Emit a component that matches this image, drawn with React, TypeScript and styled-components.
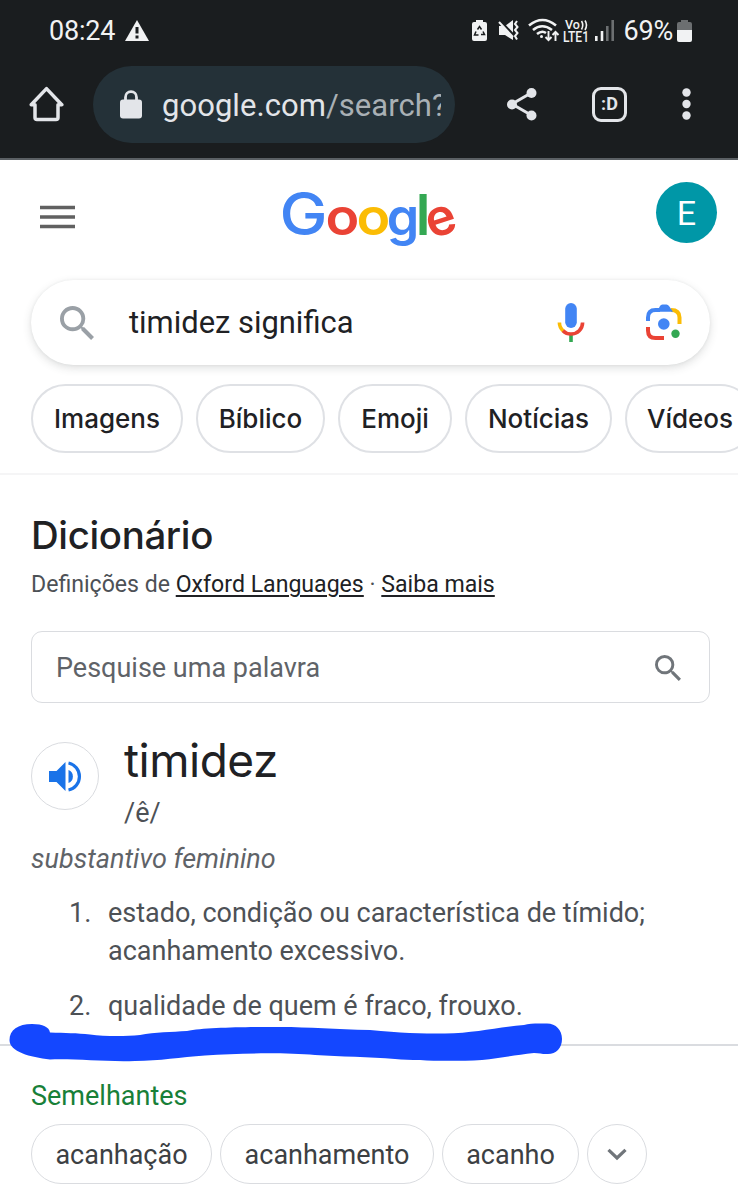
import React from 'react';
import styled, { createGlobalStyle } from 'styled-components';

const GlobalStyle = createGlobalStyle`
  * { box-sizing: border-box; }
  body { margin: 0; background: #fff; overflow: hidden; }
  button { font: inherit; padding: 0; margin: 0; background: none; border: 0; color: inherit; }
  svg { display: block; flex: none; }
`;

const sans = `Roboto, "Liberation Sans", sans-serif`;
const display = `Inter, Roboto, sans-serif`;

const Screen = styled.div`
  position: relative;
  width: 738px;
  height: 1200px;
  overflow: hidden;
  background: #fff;
  color: #202124;
  font-family: ${sans};
`;

const BrowserChrome = styled.header`
  height: 160px;
  background: #1a1d1f;
  border-bottom: 2px solid #5b6064;
`;

const StatusBar = styled.div`
  display: flex;
  justify-content: space-between;
  height: 61px;
  padding: 0 46px 0 49px;
  color: #f1f2f3;
`;

const StatusGroup = styled.div<{ $gap: number }>`
  display: flex;
  align-items: center;
  gap: ${(p) => p.$gap}px;
`;

const StatusText = styled.span`
  font-size: 27px;
  line-height: 32px;
  letter-spacing: -0.2px;
`;

const Battery = styled.div`
  display: flex;
  align-items: center;
  gap: 4px;
`;

const Toolbar = styled.div`
  display: flex;
  align-items: center;
  height: 86px;
  padding: 0 0 0 29px;
  color: #e3e5e9;
`;

const Omnibox = styled.div`
  display: flex;
  align-items: center;
  width: 362px;
  height: 77px;
  margin: 0 51px 0 29px;
  padding: 0 14px 0 27px;
  border-radius: 39px;
  background: #243138;
`;

const Url = styled.div`
  flex: 1;
  margin-left: 20px;
  padding-top: 3px;
  overflow: hidden;
  white-space: nowrap;
  font-size: 31px;
  line-height: 44px;
  letter-spacing: 0.05px;
`;

const UrlPath = styled.span`
  color: #a9b0b5;
`;

const TabsButton = styled.button`
  display: flex;
  align-items: center;
  justify-content: center;
  width: 35px;
  height: 35px;
  margin: 0 54px 0 55px;
  border: 3.5px solid #e3e5e9;
  border-radius: 9px;
  font: 700 18px/20px "Roboto", sans-serif;
`;

const PageHeader = styled.div`
  display: flex;
  justify-content: space-between;
  height: 120px;
  padding: 22px 21px 0 40px;
`;

const MenuButton = styled.button`
  height: 69px;
`;

const Logo = styled.div`
  display: flex;
  margin-left: 9px;
`;

const Avatar = styled.div`
  width: 61px;
  height: 61px;
  border-radius: 50%;
  background: #0097a7;
  color: #fff;
  font-size: 34px;
  line-height: 63px;
  text-align: center;
`;

const SearchBox = styled.div`
  display: flex;
  align-items: center;
  height: 85px;
  margin: 0 28px 0 31px;
  padding: 0 28px 0 29px;
  border-radius: 43px;
  background: #fff;
  box-shadow: 0 3px 8px rgba(60, 64, 67, 0.17), 0 0 3px rgba(60, 64, 67, 0.07);
`;

const Query = styled.span`
  flex: 1;
  margin-left: 35px;
  font-size: 30.9px;
  line-height: 40px;
`;

const SearchTools = styled.div`
  display: flex;
  align-items: center;
  gap: 61px;
  padding-bottom: 2px;
`;

const FilterBar = styled.nav`
  display: flex;
  gap: 13px;
  padding: 19px 0 20px 31px;
  border-bottom: 2px solid #f5f5f6;
`;

const FilterChip = styled.button<{ $width: number }>`
  flex: none;
  width: ${(p) => p.$width}px;
  height: 69px;
  border: 2px solid #dfe1e5;
  border-radius: 35px;
  font-family: ${display};
  font-weight: 500;
  font-size: 26px;
  white-space: nowrap;
`;

const Dictionary = styled.main`
  padding: 37px 28px 0 31px;
`;

const Title = styled.h1`
  margin: 0;
  font-family: ${display};
  font-weight: 500;
  font-size: 38.4px;
  line-height: 46px;
  letter-spacing: -0.35px;
`;

const Source = styled.p`
  margin: 12px 0 0;
  color: #4d5156;
  font-size: 23.1px;
  line-height: 30px;
`;

const SourceLink = styled.a`
  color: #202124;
  text-decoration: underline;
  text-decoration-thickness: 1.5px;
  text-underline-offset: 3px;
`;

const WordInput = styled.div`
  display: flex;
  align-items: center;
  justify-content: space-between;
  height: 72px;
  margin-top: 31px;
  padding: 2px 28px 0 24px;
  border: 1.5px solid #dadce0;
  border-radius: 11px;
  color: #5f6368;
  font-size: 27px;
`;

const Entry = styled.div`
  display: flex;
  gap: 25px;
  margin-top: 32px;
`;

const AudioButton = styled.button`
  display: flex;
  align-items: center;
  justify-content: center;
  width: 68px;
  height: 68px;
  margin-top: 7px;
  border: 1.5px solid #dadce0;
  border-radius: 50%;
`;

const Headword = styled.h2`
  margin: 0;
  font-family: ${display};
  font-weight: 400;
  font-size: 46px;
  line-height: 50px;
  letter-spacing: -0.5px;
`;

const Phonetic = styled.div`
  margin-top: 13px;
  color: #4d5156;
  font-size: 27px;
  line-height: 30px;
`;

const PartOfSpeech = styled.div`
  margin-top: 16px;
  color: #5f6368;
  font-size: 27px;
  font-style: italic;
  line-height: 30px;
`;

const Definitions = styled.ol`
  display: flex;
  flex-direction: column;
  gap: 17px;
  margin: 20px 0 0;
  padding: 0 0 0 38px;
  list-style: none;
  color: #4d5156;
  font-size: 27px;
  line-height: 38px;
`;

const Definition = styled.li`
  display: flex;
`;

const DefinitionNumber = styled.span`
  width: 39px;
`;

const Rule = styled.hr`
  height: 2px;
  margin: 19px -28px 0 -31px;
  border: 0;
  background: #dadce0;
`;

const SimilarTitle = styled.h3`
  margin: 35px 0 0;
  color: #188038;
  font-weight: 400;
  font-size: 27px;
  line-height: 30px;
`;

const SimilarList = styled.div`
  display: flex;
  gap: 8px;
  margin-top: 13px;
`;

const SimilarChip = styled.button<{ $width: number }>`
  display: flex;
  align-items: center;
  justify-content: center;
  width: ${(p) => p.$width}px;
  height: 60px;
  padding-top: 1px;
  border: 1.5px solid #dadce0;
  border-radius: 30px;
  color: #3c4043;
  font-size: 27px;
`;

const Marker = styled.svg`
  position: absolute;
  left: 0;
  top: 1015px;
`;

const WarningIcon = () => (
  <svg width="24" height="21" viewBox="0 0 24 21">
    <path d="M12 0 24 21H0Z" fill="#f1f2f3" />
    <path d="M12 7v6.5M12 15.5v3" stroke="#1a1d1f" strokeWidth="3" />
  </svg>
);

/* Battery saver, mute, wifi, VoLTE and signal indicators */
const StatusIcons = () => (
  <svg width="146" height="28" viewBox="470 17 146 28">
    <g fill="#f1f2f3">
      <path d="M476 20h7v2h2a2 2 0 0 1 2 2v15a2 2 0 0 1-2 2h-11a2 2 0 0 1-2-2V24a2 2 0 0 1 2-2h2z" />
      <path d="M499 26h6l8-6v20l-8-5h-6z" />
    </g>
    <path d="M477.500 29.500l2-3 2 3M483 31.500l1.500 3h-3.500M478.500 35h-4l1.500-3.500" fill="none" stroke="#1a1d1f" strokeWidth="1.500" />
    <path d="M500 21l16 17" stroke="#1a1d1f" strokeWidth="3" />
    <path d="M499 22l14 15" stroke="#f1f2f3" strokeWidth="2" />
    <path d="M517 21l-2 3 2.500 3-2.500 3 2.500 3-2.500 3 2 3.500" fill="none" stroke="#f1f2f3" strokeWidth="2" />
    <g fill="none" stroke="#f1f2f3" strokeWidth="2.600">
      <path d="M529 25.500q13.500-11 27 0" />
      <path d="M533 30q9-7.500 19 0" />
      <path d="M537 34q5-4 9-1" />
    </g>
    <circle cx="541.500" cy="36.500" r="1.500" fill="#f1f2f3" />
    <path d="M548.500 31v9M545.500 37l3 3.200 3-3.200M555.500 41v-9M552.500 35l3-3.200 3 3.200" fill="none" stroke="#f1f2f3" strokeWidth="1.900" />
    <g fill="#f1f2f3" fontFamily="Roboto, sans-serif" fontWeight="500">
      <text x="565" y="29" fontSize="12.500">Vo</text>
      <text x="563" y="41.500" fontSize="14" textLength="26" lengthAdjust="spacingAndGlyphs">LTE1</text>
    </g>
    <path d="M581.500 21q2.500 4 0 8.500M585 20.500q3 4.500 0 9.500" fill="none" stroke="#f1f2f3" strokeWidth="1.600" />
    <path d="M596.300 36v5M602 31v10" stroke="#f1f2f3" strokeWidth="2.600" />
    <path d="M607.300 26v15M612.700 20v21" stroke="#6c6f71" strokeWidth="2.600" />
  </svg>
);

const BatteryIcon = () => (
  <svg width="15" height="22" viewBox="0 0 15 22">
    <path d="M4 0h7v2h2a2 2 0 0 1 2 2v7H0V4a2 2 0 0 1 2-2h2z" fill="#6c6f71" />
    <path d="M0 10h15v10a2 2 0 0 1-2 2H2a2 2 0 0 1-2-2z" fill="#f1f2f3" />
  </svg>
);

const HomeIcon = () => (
  <svg width="35" height="36" viewBox="0 0 35 36" fill="none" stroke="#e3e5e9" strokeWidth="3.500" strokeLinejoin="round" strokeLinecap="round">
    <path d="M2.200 18.800 17.500 2.600l15.300 16.200H29V31.500a2 2 0 0 1-2 2H8a2 2 0 0 1-2-2V18.800z" />
  </svg>
);

const LockIcon = () => (
  <svg width="22" height="29" viewBox="0 0 22 29">
    <path d="M5.500 11V7.200a5.500 5.500 0 0 1 11 0V11" fill="none" stroke="#e3e5e9" strokeWidth="2.800" />
    <rect y="9.500" width="22" height="19" rx="3" fill="#e3e5e9" />
  </svg>
);

const ShareIcon = () => (
  <svg width="31" height="34" viewBox="0 0 31 34" fill="#e3e5e9">
    <path d="M25 6 6 17l19 11" fill="none" stroke="#e3e5e9" strokeWidth="3" />
    <circle cx="25.500" cy="6" r="5" />
    <circle cx="6" cy="17.500" r="5" />
    <circle cx="25.500" cy="28.500" r="5" />
  </svg>
);

const MoreIcon = () => (
  <svg width="10" height="34" viewBox="0 0 10 34" fill="#e3e5e9">
    <circle cx="5.500" cy="5.500" r="4.200" />
    <circle cx="5.500" cy="17" r="4.200" />
    <circle cx="5.500" cy="28.500" r="4.200" />
  </svg>
);

const MenuIcon = () => (
  <svg width="35" height="24" viewBox="0 0 35 24" stroke="#616161" strokeWidth="3.300">
    <path d="M0 2.500h35M0 12h35M0 21.500h35" />
  </svg>
);

type LogoLetterProps = { x: number; y?: number; size: number; color: string; stretch?: number; tilt?: number; children: string };

const LogoLetter = ({ x, y = 235, size, color, stretch = 1, tilt = 0, children }: LogoLetterProps) => (
  <g transform={`translate(${x} ${y - 14}) rotate(${tilt}) scale(${stretch} 1)`}>
    <text y="14" fontSize={size} fill={color} textAnchor="middle">{children}</text>
  </g>
);

const GoogleLogo = () => (
  <svg width="180" height="76" viewBox="280 182 180 76" fontFamily="Inter, sans-serif" fontWeight="600">
    <g fontWeight="500">
      <LogoLetter x={303.5} size={59} color="#4285f4" stretch={1.09}>G</LogoLetter>
    </g>
    <LogoLetter x={342.5} size={51} color="#ea4335" stretch={1.09}>o</LogoLetter>
    <LogoLetter x={373.5} size={51} color="#fbbc05" stretch={1.09}>o</LogoLetter>
    <LogoLetter x={403} size={52} color="#4285f4">g</LogoLetter>
    <LogoLetter x={423} size={56} color="#34a853">l</LogoLetter>
    <LogoLetter x={441} size={51} color="#ea4335" tilt={-18}>e</LogoLetter>
  </svg>
);

const SearchIcon = ({ size, color }: { size: number; color: string }) => (
  <svg width={size} height={size} viewBox="3 3 17.500 17.500" fill={color}>
    <path d="M15.500 14h-.790l-.280-.270A6.471 6.471 0 0 0 16 9.500 6.500 6.500 0 1 0 9.500 16c1.610 0 3.090-.590 4.230-1.570l.270.280v.790l5 4.990L20.490 19l-4.990-5zm-6 0C7.010 14 5 11.990 5 9.500S7.010 5 9.500 5 14 7.010 14 9.500 11.990 14 9.500 14z" />
  </svg>
);

const MicIcon = () => (
  <svg width="28" height="40" viewBox="0 0 28 40" fill="none" strokeWidth="3.600">
    <rect x="8.200" y="1" width="11.600" height="25" rx="5.800" fill="#4285f4" />
    <path d="M14 32v8" stroke="#34a853" />
    <path d="M2.400 20.500C2.400 24 4 27 6.500 29.200" stroke="#fbbc05" />
    <path d="M6 28.700C8.200 31 11 32 14 32c6.500 0 11.600-5 11.600-11.500" stroke="#ea4335" />
  </svg>
);

const LensIcon = () => (
  <svg width="36" height="36" viewBox="0 0 36 36" fill="none" strokeWidth="4">
    <path d="M2 17v-3.500Q2 6 9.500 6H14" stroke="#4285f4" />
    <path d="M25 6q8.500 0 8.500 7.500V20" stroke="#fbbc05" />
    <path d="M11 7.800 14 2q.7-1.500 2.500-1.500h4Q22 .500 23 2l4 5.800z" fill="#4285f4" />
    <path d="M2 23v3.500Q2 34 9.500 34H18" stroke="#ea4335" />
    <circle cx="17.800" cy="20" r="5.800" fill="#4285f4" />
    <circle cx="29.500" cy="29.800" r="4.200" fill="#34a853" />
  </svg>
);

const SpeakerIcon = () => (
  <svg width="33" height="31" viewBox="0 0 33 31" fill="#1a73e8">
    <path d="M0 10h7.500L16.500 1v29l-9-9H0z" />
    <path d="M19.500 9a7 7 0 0 1 0 13z" />
    <path d="M19.500 2a13.800 13.800 0 0 1 0 27" fill="none" stroke="#1a73e8" strokeWidth="3.200" />
  </svg>
);

const ChevronIcon = () => (
  <svg width="20" height="13" viewBox="0 0 20 13" fill="none" stroke="#70757a" strokeWidth="3.200">
    <path d="M1.500 1.800 10 10l8.500-8.200" />
  </svg>
);

const filters = [
  { label: 'Imagens', width: 152 },
  { label: 'Bíblico', width: 129 },
  { label: 'Emoji', width: 114 },
  { label: 'Notícias', width: 147 },
  { label: 'Vídeos', width: 130 },
];

const definitions = [
  <>estado, condição ou característica de tímido;<br />acanhamento excessivo.</>,
  <>qualidade de quem é fraco, frouxo.</>,
];

const similar = [
  { label: 'acanhação', width: 181 },
  { label: 'acanhamento', width: 214 },
  { label: 'acanho', width: 137 },
];

export default function App() {
  return (
    <Screen>
      <GlobalStyle />
      <BrowserChrome>
        <StatusBar>
          <StatusGroup $gap={10}>
            <StatusText>08:24</StatusText>
            <WarningIcon />
          </StatusGroup>
          <StatusGroup $gap={7}>
            <StatusIcons />
            <Battery>
              <StatusText>69%</StatusText>
              <BatteryIcon />
            </Battery>
          </StatusGroup>
        </StatusBar>
        <Toolbar>
          <HomeIcon />
          <Omnibox>
            <LockIcon />
            <Url>google.com<UrlPath>/search?</UrlPath></Url>
          </Omnibox>
          <ShareIcon />
          <TabsButton>:D</TabsButton>
          <MoreIcon />
        </Toolbar>
      </BrowserChrome>
      <PageHeader>
        <MenuButton><MenuIcon /></MenuButton>
        <Logo><GoogleLogo /></Logo>
        <Avatar>E</Avatar>
      </PageHeader>
      <SearchBox>
        <SearchIcon size={34} color="#9aa0a6" />
        <Query>timidez significa</Query>
        <SearchTools>
          <MicIcon />
          <LensIcon />
        </SearchTools>
      </SearchBox>
      <FilterBar>
        {filters.map((f) => (
          <FilterChip key={f.label} $width={f.width}>{f.label}</FilterChip>
        ))}
      </FilterBar>
      <Dictionary>
        <Title>Dicionário</Title>
        <Source>
          Definições de <SourceLink>Oxford Languages</SourceLink> · <SourceLink>Saiba mais</SourceLink>
        </Source>
        <WordInput>
          <span>Pesquise uma palavra</span>
          <SearchIcon size={26} color="#70757a" />
        </WordInput>
        <Entry>
          <AudioButton><SpeakerIcon /></AudioButton>
          <div>
            <Headword>timidez</Headword>
            <Phonetic>/ê/</Phonetic>
          </div>
        </Entry>
        <PartOfSpeech>substantivo feminino</PartOfSpeech>
        <Definitions>
          {definitions.map((text, i) => (
            <Definition key={i}>
              <DefinitionNumber>{i + 1}.</DefinitionNumber>
              <span>{text}</span>
            </Definition>
          ))}
        </Definitions>
        <Rule />
        <SimilarTitle>Semelhantes</SimilarTitle>
        <SimilarList>
          {similar.map((s) => (
            <SimilarChip key={s.label} $width={s.width}>{s.label}</SimilarChip>
          ))}
          <SimilarChip $width={60}><ChevronIcon /></SimilarChip>
        </SimilarList>
      </Dictionary>
      <Marker width="580" height="56" viewBox="0 1015 580 56">
        <path
          fill="#1447ff"
          d="M9.500 1040C9.500 1030 18 1024 32 1024C43 1024 49 1027 50 1032.500C65 1033 77 1033 90 1034.500C105 1036.500 125 1036.500 140 1035C155 1032 172 1032 187 1031C205 1027.500 245 1027 280 1027C310 1027 335 1029.500 370 1030C400 1033 420 1033.500 445 1033.500C475 1033 495 1027.500 524 1025C530 1023 540 1023.500 547 1023.500C556 1023.500 562 1030 562 1039C562 1048 556 1054 548 1054C543 1054.500 540 1053 534 1053C515 1055 500 1058 482 1060C455 1061.500 420 1061 395 1059C370 1057 340 1056.500 315 1055C285 1052.500 240 1053 205 1055.500C180 1057 160 1061 135 1061C105 1062 75 1058.500 50 1059.500C30 1057 9.500 1052 9.500 1040Z"
        />
      </Marker>
    </Screen>
  );
}
